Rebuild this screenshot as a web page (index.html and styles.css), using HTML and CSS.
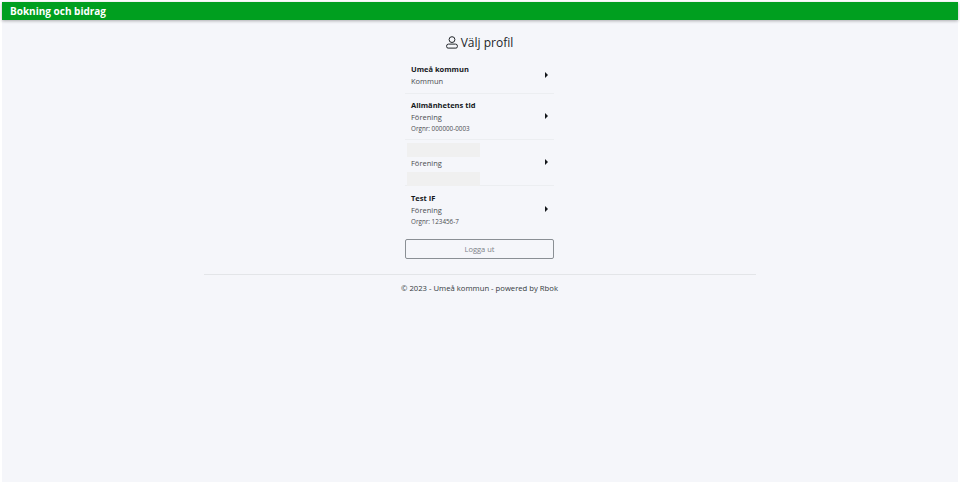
FILE: index.html
```html
<!DOCTYPE html>
<html lang="sv">
<head>
<meta charset="utf-8">
<title>Bokning och bidrag</title>
<link rel="stylesheet" href="styles.css">
</head>
<body>
<div class="app">
  <header class="topbar">Bokning och bidrag</header>
  <main class="content">
    <h1 class="title">
      <svg class="person" viewBox="0 0 12 13" width="12" height="13" fill="none" stroke="currentColor" stroke-width="1" aria-hidden="true"><circle cx="6" cy="3.600" r="2.900"/><path d="M2.500 8.100h7A1.900 1.900 0 0 1 11.400 10v.600a1.500 1.500 0 0 1-1.500 1.500H2.100A1.500 1.500 0 0 1 .6 10.600V10a1.900 1.900 0 0 1 1.900-1.900Z"/></svg>
      <span>Välj profil</span>
    </h1>
    <ul class="profiles">
      <li class="profile p-short">
        <div class="info"><div class="name">Umeå kommun</div><div class="type">Kommun</div></div>
        <span class="arrow"></span>
      </li>
      <li class="profile">
        <div class="info"><div class="name">Allmänhetens tid</div><div class="type">Förening</div><div class="org">Orgnr: 000000-0003</div></div>
        <span class="arrow"></span>
      </li>
      <li class="profile masked">
        <div class="mask mask-top"></div>
        <div class="info info-masked"><div class="type">Förening</div></div>
        <div class="mask mask-bottom"></div>
        <span class="arrow"></span>
      </li>
      <li class="profile">
        <div class="info"><div class="name">Test IF</div><div class="type">Förening</div><div class="org">Orgnr: 123456-7</div></div>
        <span class="arrow"></span>
      </li>
    </ul>
    <button class="logout" type="button">Logga ut</button>
    <footer class="foot">© 2023 - Umeå kommun - powered by Rbok</footer>
  </main>
</div>
</body>
</html>
```
FILE: styles.css
```css
* { box-sizing: border-box; }
html, body { height: 100%; }
body {
  margin: 0;
  padding: 2px 2px 3px;
  background: #fff;
  font-family: "Open Sans", "Noto Sans", sans-serif;
  color: #212529;
}
.app {
  height: 100%;
  background: #f5f6fa;
  display: flex;
  flex-direction: column;
}
.topbar {
  height: 18px;
  background: #009f1f;
  color: #fff;
  font-size: 10px;
  font-weight: 700;
  line-height: 18px;
  padding-left: 8px;
  box-shadow: 0 1px 3px rgba(0, 0, 0, .3);
}
.content {
  display: flex;
  flex-direction: column;
  align-items: center;
  padding: 14px 1px 0 0;
}
.title {
  margin: 0 0 7px;
  height: 17px;
  font-size: 12px;
  font-weight: 400;
  line-height: 17px;
  display: flex;
  align-items: center;
  gap: 3px;
  color: #212529;
}
.person { display: block; }
.profiles {
  list-style: none;
  margin: 0;
  padding: 0;
  width: 149px;
}
.profile {
  position: relative;
  height: 46.300px;
  padding: 0 6px;
  border-bottom: 1px solid #eceef1;
  display: flex;
  flex-direction: column;
  justify-content: center;
}
.profile:last-child { border-bottom: 0; }
.p-short { height: 35.500px; }
.name { font-size: 7.500px; font-weight: 700; line-height: 12px; color: #14171a; }
.type { font-size: 7.500px; line-height: 12px; color: #4a4d50; }
.org { font-size: 6.300px; line-height: 11px; color: #4a4d50; }
.info-masked { padding-top: 1px; }
.arrow {
  position: absolute;
  right: 6px;
  top: 50%;
  margin-top: -3px;
  width: 0;
  height: 0;
  border-left: 3.500px solid #14171a;
  border-top: 3px solid transparent;
  border-bottom: 3px solid transparent;
}
.mask {
  position: absolute;
  left: 2px;
  width: 73px;
  height: 14px;
  background: #f0f0f0;
}
.mask-top { top: 3.500px; }
.mask-bottom { bottom: -1px; }
.logout {
  display: block;
  width: 149px;
  height: 20px;
  margin-top: 7px;
  padding: 0;
  border: 1px solid #8a8f94;
  border-radius: 2px;
  background: transparent;
  color: #7d8288;
  font: 7.500px/18px "Open Sans", "Noto Sans", sans-serif;
}
.foot {
  width: 552px;
  margin-top: 15px;
  border-top: 1px solid #e3e5e8;
  padding-top: 7px;
  text-align: center;
  font-size: 7.700px;
  line-height: 12px;
  color: #343a40;
}
```
